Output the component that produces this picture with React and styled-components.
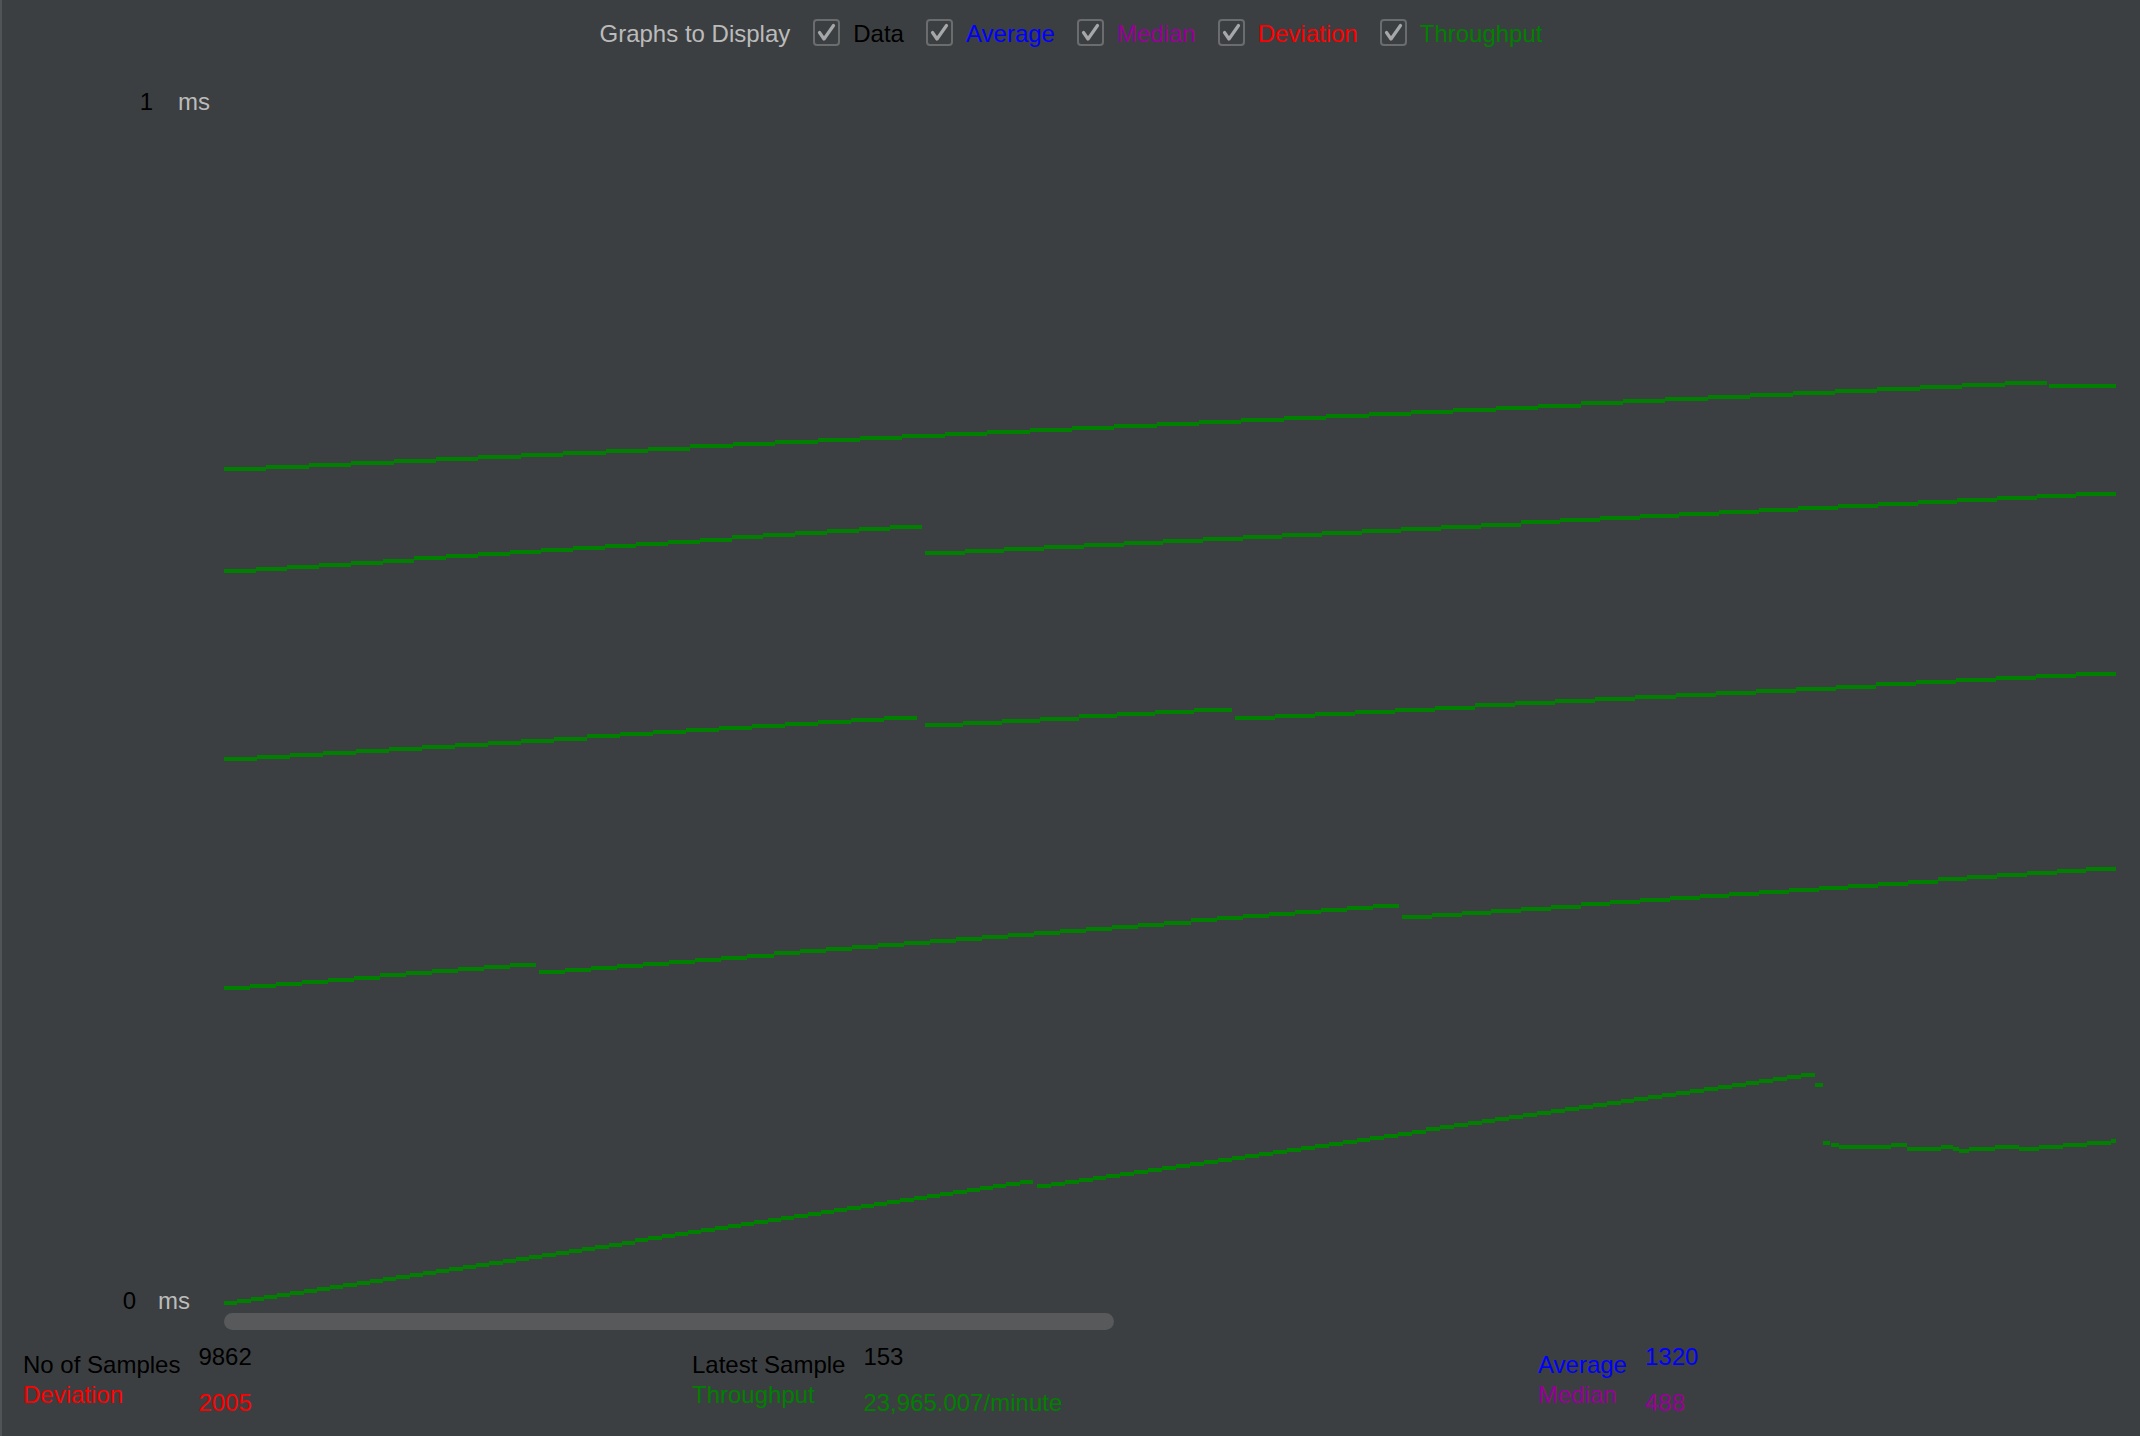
import React from "react";
import styled, { createGlobalStyle } from "styled-components";

const GlobalStyle = createGlobalStyle`
  html, body {
    margin: 0;
    padding: 0;
    background: #3c3f41;
  }
  body {
    font-family: "Liberation Sans", Arial, sans-serif;
  }
`;

const Frame = styled.div`
  width: 2140px;
  height: 1436px;
  box-sizing: border-box;
  border-left: 2px solid #515456;
  background: #3c3f41;
  overflow: hidden;
  display: flex;
  flex-direction: column;
  font-family: "Liberation Sans", Arial, sans-serif;
  font-size: 24px;
`;

const Toolbar = styled.div`
  height: 64px;
  flex: none;
  display: flex;
  align-items: center;
  justify-content: center;
  gap: 22px;
`;

const Title = styled.span`
  color: #bbbbbb;
  padding-top: 4px;
  margin-right: 1px;
  white-space: nowrap;
`;

const Option = styled.label`
  display: flex;
  align-items: center;
  gap: 13px;
`;

const Box = styled.span`
  width: 27px;
  height: 27px;
  box-sizing: border-box;
  border: 2px solid #6b6c6d;
  border-radius: 4px;
  display: flex;
  align-items: center;
  justify-content: center;
  position: relative;
  svg {
    position: absolute;
    left: -2px;
    top: -2px;
  }
`;

const OptionText = styled.span`
  color: ${(p) => p.$color};
  padding-top: 4px;
  white-space: nowrap;
`;

const Chart = styled.svg`
  display: block;
  flex: none;
  width: 2138px;
  height: 1249px;
`;

const ScrollRow = styled.div`
  flex: none;
  height: 17px;
  padding-left: 222px;
`;

const Thumb = styled.div`
  width: 890px;
  height: 17px;
  border-radius: 9px;
  background: #57595b;
`;

const Stats = styled.div`
  flex: none;
  margin-top: 4px;
  padding-left: 21px;
  display: grid;
  grid-template-columns: 669px 846px 1fr;
`;

const StatGroup = styled.div`
  display: flex;
  gap: 18px;
  align-items: flex-start;
`;

const LabelCol = styled.div`
  display: flex;
  flex-direction: column;
  padding-top: 16px;
  line-height: 30px;
`;

const ValueCol = styled.div`
  display: flex;
  flex-direction: column;
  line-height: 46px;
`;

const StatText = styled.span`
  color: ${(p) => p.$color};
  white-space: nowrap;
`;

const GREEN = "#007f00";

const CheckMark = () => (
  <svg width="27" height="27" viewBox="0 0 27 27">
    <polyline
      points="6.5,13.5 11,20 20.5,6.5"
      fill="none"
      stroke="#a6a7a8"
      strokeWidth="3.2"
      strokeLinecap="round"
      strokeLinejoin="round"
    />
  </svg>
);

const options = [
  { label: "Data", color: "#000000" },
  { label: "Average", color: "#0000ff" },
  { label: "Median", color: "#990099" },
  { label: "Deviation", color: "#ff0000" },
  { label: "Throughput", color: "#008000" },
];

const segments = [
  [[224, 469], [2047, 383]],
  [[2049, 386], [2116, 385]],
  [[224, 571], [922, 527]],
  [[925, 553], [2116, 494]],
  [[224, 759], [917, 718]],
  [[925, 725], [1232, 710]],
  [[1235, 718], [2116, 674]],
  [[224, 988], [536, 965]],
  [[539, 972], [1399, 906]],
  [[1402, 917], [2116, 869]],
  [[224, 1303], [1033, 1182]],
  [[1037, 1186], [1815, 1075]],
];

const bars = [
  [1815, 1823, 1085],
  [1823, 1830, 1143],
  [1831, 1839, 1145],
  [1839, 1853, 1147],
  [1853, 1891, 1147],
  [1891, 1907, 1145],
  [1907, 1941, 1149],
  [1941, 1953, 1147],
  [1953, 1959, 1149],
  [1959, 1969, 1151],
  [1969, 1995, 1149],
  [1995, 2019, 1147],
  [2019, 2039, 1149],
  [2039, 2063, 1147],
  [2063, 2087, 1145],
  [2087, 2111, 1143],
  [2111, 2116, 1141],
];

function stepPath([x0, y0], [x1, y1]) {
  const n = Math.max(1, Math.round(Math.abs(y1 - y0) / 2));
  const w = (x1 - x0) / n;
  let d = "";
  for (let i = 0; i < n; i++) {
    const xa = Math.round(x0 + i * w);
    const xb = Math.round(x0 + (i + 1) * w);
    const t = n > 1 ? i / (n - 1) : 0;
    const y = Math.round(y0 + (y1 - y0) * t);
    d += `M${xa} ${y}H${xb}`;
  }
  return d;
}

const linePath =
  segments.map(([a, b]) => stepPath(a, b)).join("") +
  bars.map(([a, b, y]) => `M${a} ${y}H${b}`).join("");

const groups = [
  {
    labels: [
      { t: "No of Samples", c: "#000000" },
      { t: "Deviation", c: "#ff0000" },
    ],
    values: [
      { t: "9862", c: "#000000" },
      { t: "2005", c: "#ff0000" },
    ],
  },
  {
    labels: [
      { t: "Latest Sample", c: "#000000" },
      { t: "Throughput", c: "#008000" },
    ],
    values: [
      { t: "153", c: "#000000" },
      { t: "23,965.007/minute", c: "#008000" },
    ],
  },
  {
    labels: [
      { t: "Average", c: "#0000ff" },
      { t: "Median", c: "#990099" },
    ],
    values: [
      { t: "1320", c: "#0000ff" },
      { t: "488", c: "#990099" },
    ],
  },
];

export default function App() {
  return (
    <>
      <GlobalStyle />
      <Frame>
        <Toolbar>
          <Title>Graphs to Display</Title>
          {options.map((o) => (
            <Option key={o.label}>
              <Box>
                <CheckMark />
              </Box>
              <OptionText $color={o.color}>{o.label}</OptionText>
            </Option>
          ))}
        </Toolbar>

        <Chart viewBox="2 64 2138 1249">
          <g fontFamily="'Liberation Sans', Arial, sans-serif" fontSize="24">
            <text x="153" y="110" textAnchor="end" fill="#000000">1</text>
            <text x="178" y="110" fill="#bbbbbb">ms</text>
            <text x="136" y="1309" textAnchor="end" fill="#000000">0</text>
            <text x="158" y="1309" fill="#bbbbbb">ms</text>
          </g>
          <path
            d={linePath}
            fill="none"
            stroke={GREEN}
            strokeWidth="4"
            shapeRendering="crispEdges"
          />
        </Chart>

        <ScrollRow>
          <Thumb />
        </ScrollRow>

        <Stats>
          {groups.map((g, i) => (
            <StatGroup key={i}>
              <LabelCol>
                {g.labels.map((l) => (
                  <StatText key={l.t} $color={l.c}>{l.t}</StatText>
                ))}
              </LabelCol>
              <ValueCol>
                {g.values.map((v) => (
                  <StatText key={v.t} $color={v.c}>{v.t}</StatText>
                ))}
              </ValueCol>
            </StatGroup>
          ))}
        </Stats>
      </Frame>
    </>
  );
}
